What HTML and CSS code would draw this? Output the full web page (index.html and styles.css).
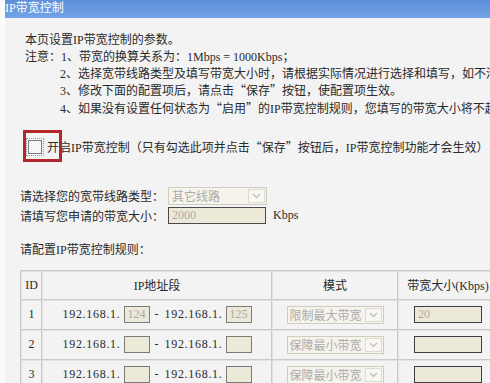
FILE: index.html
```html
<!DOCTYPE html>
<html lang="zh-CN">
<head>
    <meta charset="UTF-8">
    <title>IP带宽控制</title>
    <link rel="stylesheet" href="styles.css">
</head>
<body>
    <div class="page">
        <div class="title-bar">IP带宽控制</div>

        <div class="intro">
            <p>本页设置IP带宽控制的参数。</p>
            <p>注意：1、带宽的换算关系为：1Mbps = 1000Kbps；</p>
            <p class="indent">2、选择宽带线路类型及填写带宽大小时，请根据实际情况进行选择和填写，如不清楚，请咨询您的带宽提供商。</p>
            <p class="indent">3、修改下面的配置项后，请点击<span class="q">“</span>保存<span class="q">”</span>按钮，使配置项生效。</p>
            <p class="indent">4、如果没有设置任何状态为<span class="q">“</span>启用<span class="q">”</span>的IP带宽控制规则，您填写的带宽大小将不起作用。</p>
        </div>

        <div class="enable-row">
            <span class="checkbox"></span>
            <span>开启IP带宽控制（只有勾选此项并点击<span class="q">“</span>保存<span class="q">”</span>按钮后，IP带宽控制功能才会生效）</span>
            <!-- annotation frame drawn over the checkbox -->
            <span class="mark"></span>
        </div>

        <div class="line-form">
            <label>请选择您的宽带线路类型：</label>
            <div class="select wide">
                <span class="select-text">其它线路</span>
                <span class="select-arrow"><svg width="9" height="6" viewBox="0 0 9 6"><polyline points="1,1 4.5,4.5 8,1" fill="none" stroke="#b9b9b9" stroke-width="1.2"/></svg></span>
            </div>
            <span></span>

            <label>请填写您申请的带宽大小：</label>
            <div class="text-box wide">2000</div>
            <span class="unit">Kbps</span>
        </div>

        <div class="rule-title">请配置IP带宽控制规则：</div>

        <table class="rules">
            <tr>
                <th class="col-id">ID</th>
                <th class="col-ip">IP地址段</th>
                <th class="col-mode">模式</th>
                <th class="col-bw">带宽大小(Kbps)</th>
            </tr>
            <tr>
                <td>1</td>
                <td>
                    <div class="ip-range">
                        <span class="ip">192.168.1.</span><span class="text-box small">124</span>
                        <span class="dash">-</span>
                        <span class="ip">192.168.1.</span><span class="text-box small">125</span>
                    </div>
                </td>
                <td>
                    <div class="select mode">
                        <span class="select-text">限制最大带宽</span>
                        <span class="select-arrow"><svg width="9" height="6" viewBox="0 0 9 6"><polyline points="1,1 4.5,4.5 8,1" fill="none" stroke="#b9b9b9" stroke-width="1.2"/></svg></span>
                    </div>
                </td>
                <td><div class="text-box bw">20</div></td>
            </tr>
            <tr>
                <td>2</td>
                <td>
                    <div class="ip-range">
                        <span class="ip">192.168.1.</span><span class="text-box small"></span>
                        <span class="dash">-</span>
                        <span class="ip">192.168.1.</span><span class="text-box small"></span>
                    </div>
                </td>
                <td>
                    <div class="select mode">
                        <span class="select-text">保障最小带宽</span>
                        <span class="select-arrow"><svg width="9" height="6" viewBox="0 0 9 6"><polyline points="1,1 4.5,4.5 8,1" fill="none" stroke="#b9b9b9" stroke-width="1.2"/></svg></span>
                    </div>
                </td>
                <td><div class="text-box bw"></div></td>
            </tr>
            <tr>
                <td>3</td>
                <td>
                    <div class="ip-range">
                        <span class="ip">192.168.1.</span><span class="text-box small"></span>
                        <span class="dash">-</span>
                        <span class="ip">192.168.1.</span><span class="text-box small"></span>
                    </div>
                </td>
                <td>
                    <div class="select mode">
                        <span class="select-text">保障最小带宽</span>
                        <span class="select-arrow"><svg width="9" height="6" viewBox="0 0 9 6"><polyline points="1,1 4.5,4.5 8,1" fill="none" stroke="#b9b9b9" stroke-width="1.2"/></svg></span>
                    </div>
                </td>
                <td><div class="text-box bw"></div></td>
            </tr>
        </table>
    </div>
</body>
</html>
```

FILE: styles.css
```css
:root {
    --text-color: #2a2a2a;
    --page-bg: #f3f3f3;
    --line-color: #c9c9c9;
    --field-bg: #ece9d8;
}

* {
    margin: 0;
    padding: 0;
    box-sizing: border-box;
}

html,
body {
    overflow: hidden;
}

body {
    font-family: "Liberation Serif", "Noto Sans CJK SC", serif;
    font-size: 12px;
    color: var(--text-color);
    background-color: #fbfbfb;
    height: 383px;
}

.q {
    font-family: "Noto Sans CJK SC", sans-serif;
}

.page {
    margin-left: 5px;
    background-color: var(--page-bg);
    height: 383px;
}

.title-bar {
    height: 18px;
    line-height: 16px;
    color: #fff;
    background: linear-gradient(#5d8fda, #73a3e6);
    white-space: nowrap;
}

.intro {
    padding: 14px 0 0 20px;
    line-height: 16.75px;
    white-space: nowrap;
}

.intro .indent {
    padding-left: 35px;
}

.enable-row {
    position: relative;
    margin-top: 19px;
    padding-left: 23px;
    height: 20px;
    display: flex;
    align-items: center;
    gap: 5px;
    white-space: nowrap;
}

.checkbox {
    width: 14px;
    height: 14px;
    border: 1px solid #7c7c7c;
    background-color: #f6f6f6;
    outline: 1px dotted #9a9a9a;
    outline-offset: 1px;
    flex-shrink: 0;
}

.mark {
    position: absolute;
    left: 18px;
    top: -7px;
    width: 39px;
    height: 32px;
    border: 3px solid #b3272c;
}

.line-form {
    margin-top: 29px;
    padding-left: 15px;
    display: grid;
    grid-template-columns: 148px 99px auto;
    grid-auto-rows: 20px;
    align-items: center;
    white-space: nowrap;
}

.unit {
    padding-left: 6px;
}

.select {
    height: 18px;
    display: flex;
    align-items: center;
    justify-content: space-between;
    border: 1px solid #cfccc0;
    background-color: #f5f3ec;
    color: #ababab;
    padding-left: 3px;
    text-align: left;
}

.select-text {
    flex: 1;
    overflow: visible;
}

.select-arrow {
    width: 17px;
    height: 14px;
    margin-right: 1px;
    border: 1px solid #dedbd1;
    background-color: #f8f7f2;
    display: flex;
    align-items: center;
    justify-content: center;
    flex-shrink: 0;
}

.select.wide {
    width: 99px;
}

.select.mode {
    width: 97px;
    margin: 0 auto;
    padding-left: 2px;
}

.text-box {
    height: 17px;
    line-height: 15px;
    border: 1px solid #4a4a4a;
    background-color: var(--field-bg);
    color: #a9a9a9;
    padding-left: 3px;
    text-align: left;
}

.text-box.wide {
    width: 98px;
}

.text-box.small {
    display: inline-block;
    width: 26px;
    border-color: #7b7b7b;
    margin-left: 3px;
}

.text-box.bw {
    width: 68px;
    margin: 0 auto;
    border-color: #3b4048;
}

.rule-title {
    margin-top: 16px;
    padding-left: 15px;
    line-height: 17px;
}

.rules {
    margin: 11px 0 0 15px;
    border-spacing: 0;
    border-top: 1px solid var(--line-color);
    border-left: 1px solid var(--line-color);
    width: 478px;
    white-space: nowrap;
}

.rules th,
.rules td {
    border-right: 1px solid var(--line-color);
    border-bottom: 1px solid var(--line-color);
    border-left: 1px solid #e2e2e2;
    border-top: 1px solid #e2e2e2;
    text-align: center;
    vertical-align: middle;
    font-weight: normal;
    height: 30px;
}

.rules th {
    height: 29px;
}

.col-id {
    width: 21px;
}

.col-ip {
    width: 230px;
}

.col-mode {
    width: 126px;
}

.ip-range {
    display: flex;
    align-items: center;
    justify-content: center;
}

.ip {
    letter-spacing: 0.7px;
}

.dash {
    margin: 0 6px 0 5px;
}
```
